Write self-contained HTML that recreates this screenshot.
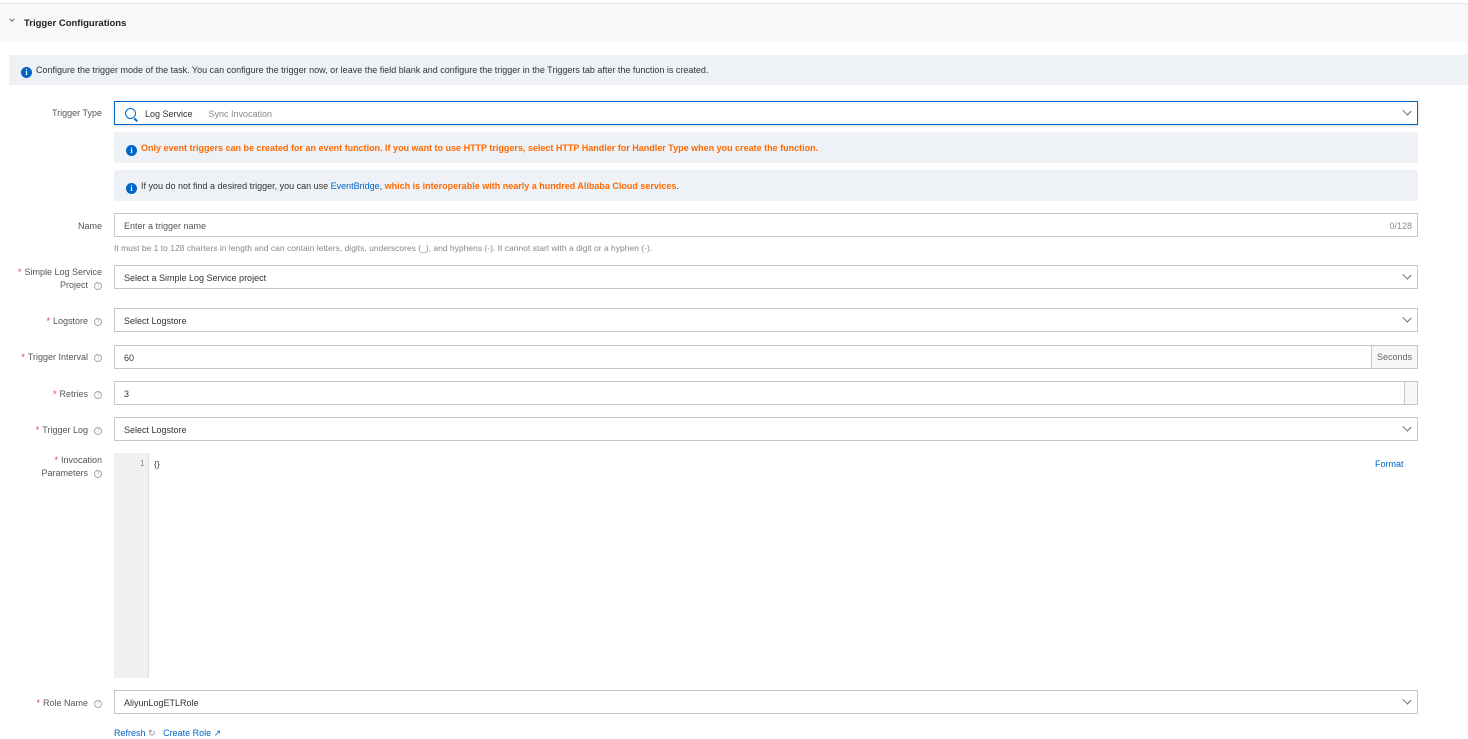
<!DOCTYPE html>
<html><head><style>
*{box-sizing:border-box;margin:0;padding:0}
body{width:1468px;height:739px;overflow:hidden;background:#fff;font-family:"Liberation Sans",sans-serif;font-size:9px;color:#333;position:relative}
.a{position:absolute}
.lbl{position:absolute;right:1366px;text-align:right;color:#555;line-height:13px;font-size:9px;margin-top:1px}
.req{color:#e4393c;margin-right:3px}
.q{display:inline-block;width:8px;height:8px;border:1px solid #aaa;border-radius:50%;font-size:6px;line-height:6px;text-align:center;color:#aaa;margin-left:6px;vertical-align:middle}
.inp{position:absolute;left:114px;width:1304px;height:24px;border:1px solid #c4c6cc;background:#fff;padding-left:9px;padding-top:1px;line-height:22px;font-size:9px;color:#333}
.chev{position:absolute;right:7px;top:6px;width:6px;height:6px;border-right:1px solid #777;border-bottom:1px solid #777;transform:rotate(45deg) scaleX(1.2)}
.i{display:inline-block;width:11px;height:11px;border-radius:50%;background:#0064c8;color:#fff;font-size:8px;line-height:11px;text-align:center;font-weight:bold;vertical-align:-2px;margin-right:4px;font-family:"Liberation Serif",serif}
.box{position:absolute;left:114px;width:1304px;background:#eef1f5;border-radius:2px;padding-left:12px;padding-top:1px;font-size:9px}
</style></head><body>
<div class="a" style="left:0;top:3px;width:1468px;height:1px;background:#e3e5e8"></div>
<div class="a" style="left:0;top:4px;width:1468px;height:38px;background:#f7f8fa"></div>
<div class="a" style="left:10px;top:17px;width:4px;height:4px;border-right:1px solid #777;border-bottom:1px solid #777;transform:rotate(45deg)"></div>
<div class="a" style="left:24px;top:18px;font-weight:bold;font-size:9.5px;color:#222">Trigger Configurations</div>
<div class="a" style="left:9px;top:55px;width:1459px;height:30px;background:#eef1f5;padding:10px 0 0 12px;font-size:9px;color:#333"><span class="i">i</span>Configure the trigger mode of the task. You can configure the trigger now, or leave the field blank and configure the trigger in the Triggers tab after the function is created.</div>

<div class="lbl" style="top:106px">Trigger Type</div>
<div class="inp" style="top:101px;border-color:#0064c8;box-shadow:0 1px 3px rgba(0,0,0,.15);padding-left:10px">
<span style="display:inline-block;width:11px;height:11px;border:1.5px solid #0064c8;border-radius:50%;vertical-align:-2px;margin-right:9px;position:relative"><span style="position:absolute;right:-3px;bottom:-2px;width:4px;height:1.5px;background:#0064c8;transform:rotate(45deg)"></span></span>Log Service<span style="color:#888;margin-left:16px">Sync Invocation</span><div class="chev"></div></div>

<div class="box" style="top:132px;height:31px;line-height:30px;color:#ff6a00;font-weight:bold"><span class="i">i</span>Only event triggers can be created for an event function. If you want to use HTTP triggers, select HTTP Handler for Handler Type when you create the function.</div>
<div class="box" style="top:170px;height:31px;line-height:30px;color:#333"><span class="i">i</span>If you do not find a desired trigger, you can use <span style="color:#0064c8">EventBridge</span>, <b style="color:#ff6a00">which is interoperable with nearly a hundred Alibaba Cloud services</b>.</div>

<div class="lbl" style="top:219px">Name</div>
<div class="inp" style="top:213px;color:#555">Enter a trigger name<span style="position:absolute;right:5px;color:#888">0/128</span></div>
<div class="a" style="left:114px;top:243px;color:#888;font-size:8.5px">It must be 1 to 128 charters in length and can contain letters, digits, underscores (_), and hyphens (-). It cannot start with a digit or a hyphen (-).</div>

<div class="lbl" style="top:265px"><span class="req">*</span>Simple Log Service<br>Project<span class="q">?</span></div>
<div class="inp" style="top:265px">Select a Simple Log Service project<div class="chev"></div></div>

<div class="lbl" style="top:314px"><span class="req">*</span>Logstore<span class="q">?</span></div>
<div class="inp" style="top:308px">Select Logstore<div class="chev"></div></div>

<div class="lbl" style="top:350px"><span class="req">*</span>Trigger Interval<span class="q">?</span></div>
<div class="inp" style="top:345px">60<span style="position:absolute;right:-1px;top:-1px;width:47px;height:24px;border:1px solid #c4c6cc;background:#f7f7f7;color:#666;text-align:center;line-height:23px">Seconds</span></div>

<div class="lbl" style="top:387px"><span class="req">*</span>Retries<span class="q">?</span></div>
<div class="inp" style="top:381px">3<span style="position:absolute;right:-1px;top:-1px;width:14px;height:24px;border:1px solid #c4c6cc;background:#f7f7f7"></span></div>

<div class="lbl" style="top:423px"><span class="req">*</span>Trigger Log<span class="q">?</span></div>
<div class="inp" style="top:417px">Select Logstore<div class="chev"></div></div>

<div class="lbl" style="top:453px"><span class="req">*</span>Invocation<br>Parameters<span class="q">?</span></div>
<div class="a" style="left:114px;top:453px;width:35px;height:225px;background:#f0f0f0;border-right:1px solid #ddd"></div>
<div class="a" style="left:140px;top:459px;font-size:8px;color:#888">1</div>
<div class="a" style="left:154px;top:459px;font-size:8.5px">{}</div>
<div class="a" style="left:1375px;top:459px;color:#0064c8">Format</div>

<div class="lbl" style="top:696px"><span class="req">*</span>Role Name<span class="q">?</span></div>
<div class="inp" style="top:690px">AliyunLogETLRole<div class="chev"></div></div>
<div class="a" style="left:114px;top:728px;color:#0064c8">Refresh <span style="color:#888">↻</span>&nbsp;&nbsp;&nbsp;Create Role ↗</div>
</body></html>
